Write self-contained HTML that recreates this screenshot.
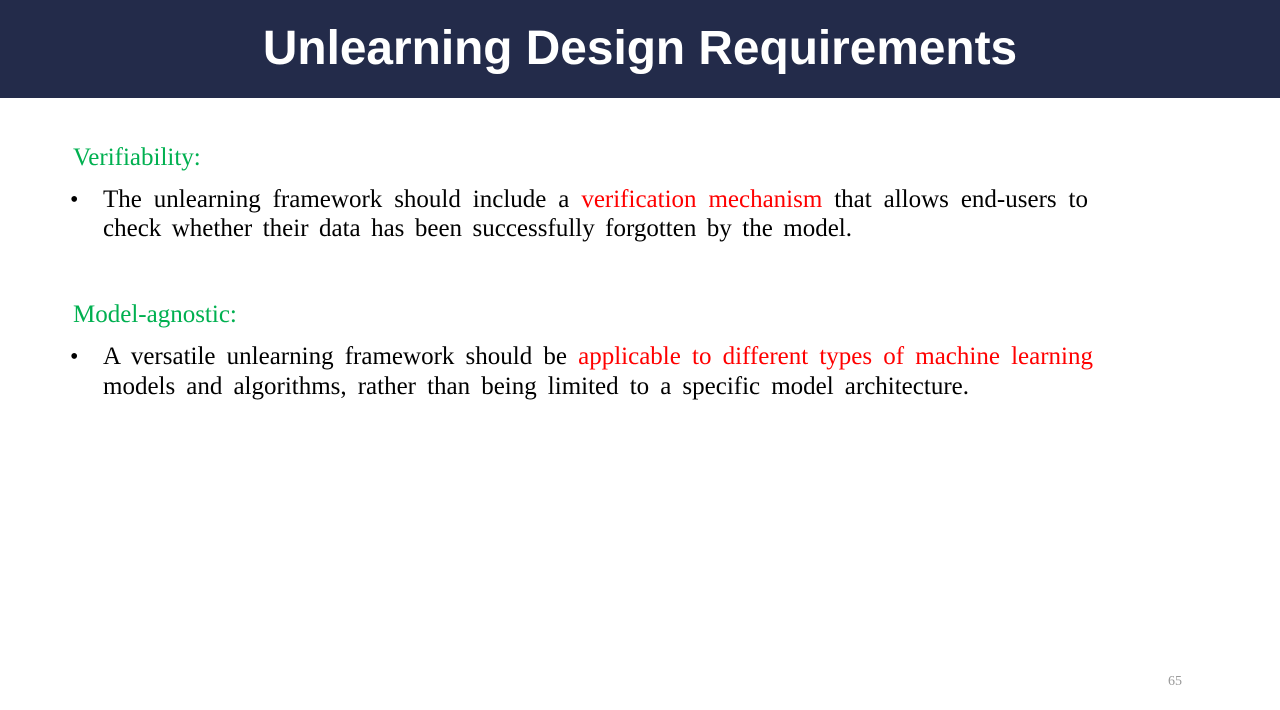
<!DOCTYPE html>
<html><head><style>
body{margin:0;width:1280px;height:710px;background:#fff;position:relative;overflow:hidden;font-family:"Liberation Serif",serif;}
.hdr{position:absolute;left:0;top:0;width:1280px;height:98px;background:#232b4a;}
.hdr h1{margin:0;position:absolute;left:0;right:0;top:19px;text-align:center;color:#fff;font:bold 47.8px/60px "Liberation Sans",sans-serif;}
.t{position:absolute;font-size:25px;line-height:28px;white-space:nowrap;color:#000;}
.j{text-align:justify;text-align-last:justify;white-space:normal;}
.g{color:#00b050;}
.r{color:#ff0000;}
.b{position:absolute;font-size:24px;line-height:28px;}
</style></head><body>
<div class="hdr"><h1>Unlearning Design Requirements</h1></div>
<div class="t g" style="left:73px;top:144px">Verifiability:</div>
<div class="b" style="left:70px;top:186px">•</div>
<div class="t j" style="left:103px;top:186px;width:985px">The unlearning framework should include a <span class="r">verification mechanism</span> that allows end-users to</div>
<div class="t j" style="left:103px;top:215px;width:749px">check whether their data has been successfully forgotten by the model.</div>
<div class="t g" style="left:73px;top:301px">Model-agnostic:</div>
<div class="b" style="left:70px;top:343px">•</div>
<div class="t j" style="left:103px;top:343px;width:990px">A versatile unlearning framework should be <span class="r">applicable to different types of machine learning</span></div>
<div class="t j" style="left:103px;top:373px;width:866px">models and algorithms, rather than being limited to a specific model architecture.</div>
<div class="t" style="left:1168px;top:673px;font-size:14px;line-height:18px;color:#999">65</div>
</body></html>
